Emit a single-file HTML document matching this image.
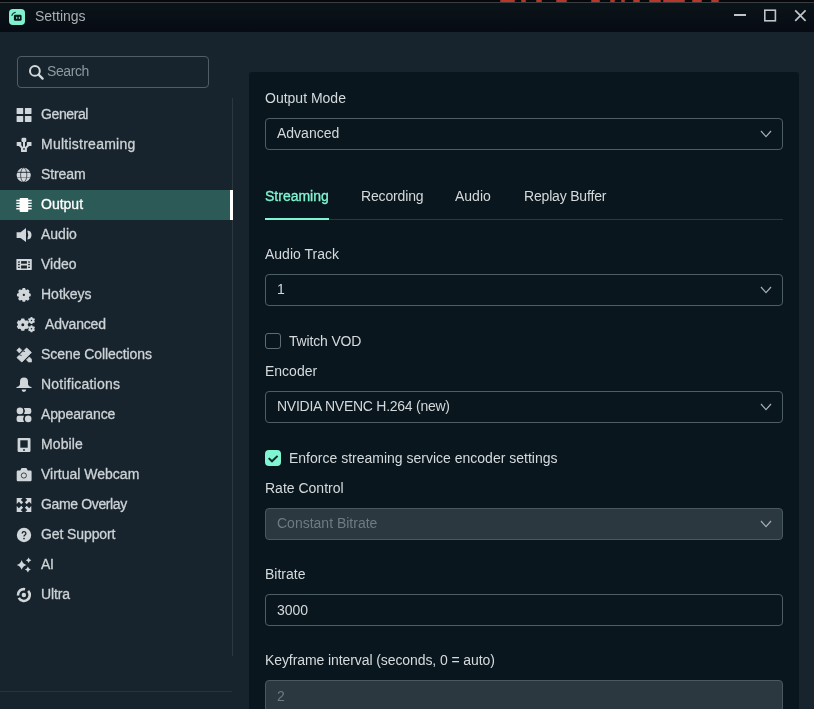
<!DOCTYPE html>
<html>
<head>
<meta charset="utf-8">
<title>Settings</title>
<style>
*{box-sizing:border-box;margin:0;padding:0}
html,body{width:814px;height:709px;overflow:hidden;background:#17242d}
body{font-family:"Liberation Sans",sans-serif;font-size:14px;color:#e3e8eb;position:relative}
.abs{position:absolute}
#topstrip{left:0;top:0;width:814px;height:3px;background:#06080b}
#topline{left:0;top:2px;width:814px;height:1px;background:#3a3e43}
#reds{left:0;top:0;width:814px;height:2px}
#reds i{position:absolute;top:0;height:2px;background:#b8362a;border-radius:1px}
#titlebar{left:0;top:3px;width:814px;height:29px;background:linear-gradient(#0a1419,#070b13)}
#title{left:35px;top:8px;font-size:14px;color:#aaafb2;line-height:16px;white-space:nowrap}
#logo{left:9px;top:9px;width:16px;height:16px}
.wc{top:9px;width:14px;height:14px}
#search{left:17px;top:56px;width:192px;height:32px;border:1px solid #4f5e65;border-radius:4px;background:#17242d}
#searchtxt{left:47px;top:63px;line-height:16px;color:#8f999e;white-space:nowrap;letter-spacing:-0.4px}
#sideline{left:232px;top:98px;width:1px;height:558px;background:#2b383f}
#footline{left:0;top:691px;width:232px;height:1px;background:#26333b}
.nav{left:0;width:233px;height:30px}
.nav span{position:absolute;left:41px;top:6px;line-height:16px;color:#cdd3d6;white-space:nowrap;-webkit-text-stroke:0.3px #cdd3d6}
.nav svg{position:absolute;left:16px;top:7px;width:16px;height:16px;fill:#d0d6d9}
.nav.active{background:#2c5a57}
.nav.active span{color:#fff;-webkit-text-stroke:0.3px #fff}
.nav.active svg{fill:#fff}
#activebar{left:230px;top:190px;width:3px;height:30px;background:#fff}
#panel{left:249px;top:72px;width:549.5px;height:637px;background:#09161d;border-radius:3px 3px 0 0}
.lbl{left:265px;line-height:16px;color:#d5dadd;white-space:nowrap}
.field{left:265px;width:518px;height:32px;border:1px solid #4f5e65;border-radius:4px;background:#09161d}
.field.dis{background:#2b383f;border-color:#4a585f}
.field span{position:absolute;left:11px;top:7px;line-height:16px;color:#d3d8db;white-space:nowrap}
.field.dis span{color:#6e7b82}
.field.sel span{top:6px}
.field svg{position:absolute;right:10px;top:11px;width:12px;height:8px}
.tab{top:188px;line-height:16px;color:#d5d9db;white-space:nowrap}
#tabline{left:265px;top:219px;width:518px;height:1px;background:#2b383f}
#tabactive{left:265px;top:218px;width:64px;height:2px;background:#80f5d2}
.cb{left:265px;width:16px;height:16px;border-radius:4px}
</style>
</head>
<body><div style="position:absolute;left:0;top:0;width:814px;height:709px;will-change:transform">
<div class="abs" id="topstrip"></div>
<div class="abs" id="reds"><i style="left:500px;width:15px"></i><i style="left:521px;width:5px"></i><i style="left:536px;width:6px"></i><i style="left:556px;width:11px"></i><i style="left:591px;width:9px"></i><i style="left:610px;width:5px"></i><i style="left:621px;width:4px"></i><i style="left:633px;width:7px"></i><i style="left:649px;width:12px"></i><i style="left:663px;width:22px"></i><i style="left:692px;width:10px"></i><i style="left:711px;width:8px"></i></div>
<div class="abs" id="topline"></div>
<div class="abs" id="titlebar"></div>
<svg class="abs" id="logo" viewBox="0 0 16 16"><rect x="0" y="0" width="16" height="16" rx="4" fill="#80f0cf"/><rect x="4.9" y="5.7" width="7.7" height="6.1" rx="1.3" fill="#06151a"/><rect x="7.2" y="7.7" width="1.1" height="2.3" rx="0.4" fill="#80f0cf"/><rect x="9.8" y="7.7" width="1.1" height="2.3" rx="0.4" fill="#80f0cf"/><path d="M2.7 6.9 A5.2 5.2 0 0 1 6.7 3.3" stroke="#0a3a33" stroke-width="1.1" fill="none"/></svg>
<svg class="abs" style="left:730px;top:5px;width:80px;height:22px" viewBox="0 0 80 22"><path d="M4 10 H16" stroke="#c0c5c8" stroke-width="2" fill="none"/><rect x="34.8" y="5.2" width="10.6" height="10.6" fill="none" stroke="#c0c5c8" stroke-width="1.6"/><path d="M65.2 5.4 L75.6 15.8 M75.6 5.4 L65.2 15.8" stroke="#c0c5c8" stroke-width="1.7" fill="none"/></svg>
<div class="abs" id="title">Settings</div>

<div class="abs" id="search"></div>
<svg class="abs" style="left:27px;top:63px;width:18px;height:18px" viewBox="0 0 18 18"><circle cx="7.9" cy="7.9" r="4.9" fill="none" stroke="#d3d8db" stroke-width="2"/><path d="M11.6 11.6 L15.6 15.6" stroke="#d3d8db" stroke-width="2.3" stroke-linecap="round"/></svg>
<div class="abs" id="searchtxt">Search</div>

<div class="abs" id="sideline"></div>
<div class="abs" id="footline"></div>

<div class="abs nav" style="top:100px"><svg viewBox="0 0 16 16"><rect x="0.6" y="0.9" width="6.6" height="6.1" rx="0.4"/><rect x="8.9" y="0.9" width="6.6" height="6.1" rx="0.4"/><rect x="0.6" y="8.9" width="6.6" height="6.1" rx="0.4"/><rect x="8.9" y="8.9" width="6.6" height="6.1" rx="0.4"/></svg><span style="letter-spacing:-0.4px">General</span></div>
<div class="abs nav" style="top:130px"><svg viewBox="0 0 16 16"><rect x="5.5" y="0.7" width="4.8" height="4.3" rx="1.2"/><rect x="0.7" y="5" width="4.6" height="4" rx="0.6"/><rect x="10.9" y="5" width="4.6" height="4" rx="0.6"/><rect x="5" y="9.9" width="5.9" height="5.1" rx="0.5"/><rect x="7" y="4.5" width="2" height="6"/><path d="M3.6 8.2 L6.4 11 M12.4 8.2 L9.6 11" stroke="#d0d6d9" stroke-width="2" fill="none"/><circle cx="8" cy="11.9" r="0.85" fill="#17242d"/></svg><span style="letter-spacing:0.25px">Multistreaming</span></div>
<div class="abs nav" style="top:160px"><svg viewBox="0 0 16 16"><circle cx="7.7" cy="7.9" r="7.1"/><ellipse cx="7.7" cy="7.9" rx="3.1" ry="7.1" fill="none" stroke="#17242d" stroke-width="0.7"/><path d="M0 5.3 H16" stroke="#17242d" stroke-width="0.9"/><path d="M0 10.6 H16" stroke="#17242d" stroke-width="0.6" opacity="0.7"/></svg><span style="letter-spacing:-0.1px">Stream</span></div>
<div class="abs nav active" style="top:190px"><svg viewBox="0 0 16 16"><rect x="3.6" y="0.9" width="8.65" height="14.1" rx="1"/><path d="M0.3 3.6 H15.7 M0.3 6.3 H15.7 M0.3 9 H15.7 M0.3 11.7 H15.7" stroke="#fff" stroke-width="1.5"/></svg><span>Output</span></div>
<div class="abs nav" style="top:220px"><svg viewBox="0 0 16 16"><path d="M0.6 5.2 H4.6 L10 1 V15 L4.6 10.9 H0.6 Z"/><path d="M11.5 3.5 A4.53 4.53 0 0 1 11.5 12.5 L11.5 11.4 A8.6 8.6 0 0 0 11.5 4.6 Z"/></svg><span>Audio</span></div>
<div class="abs nav" style="top:250px"><svg viewBox="0 0 16 16"><rect x="0.4" y="1.9" width="15.4" height="11" rx="0.6"/><g fill="#17242d"><rect x="5.1" y="4.1" width="5.8" height="2.6"/><rect x="5.1" y="8.5" width="5.8" height="3"/><rect x="2.1" y="4.4" width="1.7" height="1.3"/><rect x="2.1" y="6.9" width="1.7" height="1.3"/><rect x="2.1" y="9.7" width="1.7" height="1.3"/><rect x="12.2" y="4.4" width="1.7" height="1.3"/><rect x="12.2" y="6.9" width="1.7" height="1.3"/><rect x="12.2" y="9.7" width="1.7" height="1.3"/></g></svg><span>Video</span></div>
<div class="abs nav" style="top:280px"><svg viewBox="0 0 16 16"><path fill-rule="evenodd" d="M9.49 13.36 L9.10 14.79 L6.60 14.79 L6.21 13.36 L5.15 12.92 L3.86 13.65 L2.10 11.89 L2.83 10.60 L2.39 9.54 L0.96 9.15 L0.96 6.65 L2.39 6.26 L2.83 5.20 L2.10 3.91 L3.86 2.15 L5.15 2.88 L6.21 2.44 L6.60 1.01 L9.10 1.01 L9.49 2.44 L10.55 2.88 L11.84 2.15 L13.60 3.91 L12.87 5.20 L13.31 6.26 L14.74 6.65 L14.74 9.15 L13.31 9.54 L12.87 10.60 L13.60 11.89 L11.84 13.65 L10.55 12.92 Z M6.70 7.90 a1.15 1.15 0 1 0 2.3 0 a1.15 1.15 0 1 0 -2.3 0 Z"/></svg><span>Hotkeys</span></div>
<div class="abs nav" style="top:310px"><svg viewBox="0 0 20 16" style="width:20px"><path fill-rule="evenodd" d="M8.70 12.33 L8.29 13.82 L5.31 13.82 L4.90 12.33 L3.74 11.66 L2.24 12.05 L0.75 9.47 L1.84 8.37 L1.84 7.03 L0.75 5.93 L2.24 3.35 L3.74 3.74 L4.90 3.07 L5.31 1.58 L8.29 1.58 L8.70 3.07 L9.86 3.74 L11.36 3.35 L12.85 5.93 L11.76 7.03 L11.76 8.37 L12.85 9.47 L11.36 12.05 L9.86 11.66 Z M5.30 7.70 a1.5 1.5 0 1 0 3.0 0 a1.5 1.5 0 1 0 -3.0 0 Z"/><path fill-rule="evenodd" d="M16.56 6.19 L16.35 7.10 L14.65 7.10 L14.44 6.19 L13.79 5.82 L12.90 6.09 L12.05 4.61 L12.73 3.97 L12.73 3.23 L12.05 2.59 L12.90 1.11 L13.79 1.38 L14.44 1.01 L14.65 0.10 L16.35 0.10 L16.56 1.01 L17.21 1.38 L18.10 1.11 L18.95 2.59 L18.27 3.23 L18.27 3.97 L18.95 4.61 L18.10 6.09 L17.21 5.82 Z M14.75 3.60 a0.75 0.75 0 1 0 1.5 0 a0.75 0.75 0 1 0 -1.5 0 Z"/><path fill-rule="evenodd" d="M16.56 14.39 L16.35 15.30 L14.65 15.30 L14.44 14.39 L13.79 14.02 L12.90 14.29 L12.05 12.81 L12.73 12.17 L12.73 11.43 L12.05 10.79 L12.90 9.31 L13.79 9.58 L14.44 9.21 L14.65 8.30 L16.35 8.30 L16.56 9.21 L17.21 9.58 L18.10 9.31 L18.95 10.79 L18.27 11.43 L18.27 12.17 L18.95 12.81 L18.10 14.29 L17.21 14.02 Z M14.75 11.80 a0.75 0.75 0 1 0 1.5 0 a0.75 0.75 0 1 0 -1.5 0 Z"/></svg><span style="left:45px;letter-spacing:-0.18px">Advanced</span></div>
<div class="abs nav" style="top:340px"><svg viewBox="0 0 16 16"><path d="M10.6 1 L15.3 5.5 L5.8 15 L1 10.6 Z" stroke="#d0d6d9" stroke-width="1" stroke-linejoin="round"/><path d="M3.3 0.7 L5.9 3.3 L3.3 5.9 L0.7 3.3 Z" stroke="#d0d6d9" stroke-width="0.6" stroke-linejoin="round"/><path d="M10.4 12.9 L13.4 9.9 L15.6 12.3 V15 H12.6 Z" stroke="#d0d6d9" stroke-width="0.6" stroke-linejoin="round"/><path d="M6.4 3.8 L9 4.6 M3 7.6 L5.6 8.6" stroke="#17242d" stroke-width="0.8"/></svg><span style="letter-spacing:-0.07px">Scene Collections</span></div>
<div class="abs nav" style="top:370px"><svg viewBox="0 0 16 16"><path d="M0.5 11 H15.5 V10.1 C14 9.7 12.3 9 12 7.3 V4.6 A4 4 0 0 0 4 4.6 V7.3 C3.7 9 2 9.7 0.5 10.1 Z"/><path d="M5.6 12.6 H10.2 A2.3 2.3 0 0 1 5.6 12.6 Z"/></svg><span style="letter-spacing:0.22px">Notifications</span></div>
<div class="abs nav" style="top:400px"><svg viewBox="0 0 16 16"><circle cx="3.95" cy="3.9" r="3.3"/><path d="M8 0.9 H13.3 A2 2 0 0 1 15.3 2.9 V5 A2 2 0 0 1 13.3 7 H8 L9 3.95 Z"/><path d="M8 8.8 H2.6 A2 2 0 0 0 0.6 10.8 V13 A2 2 0 0 0 2.6 15 H8 L7 11.9 Z"/><circle cx="12.2" cy="11.9" r="3.3"/></svg><span style="letter-spacing:-0.13px">Appearance</span></div>
<div class="abs nav" style="top:430px"><svg viewBox="0 0 16 16"><rect x="1.6" y="0.9" width="12.9" height="14.1" rx="1.2"/><rect x="4.3" y="3.3" width="7.4" height="7.4" fill="#17242d"/><circle cx="8" cy="13" r="0.9" fill="#17242d"/></svg><span style="letter-spacing:0.12px">Mobile</span></div>
<div class="abs nav" style="top:460px"><svg viewBox="0 0 16 16"><path d="M1.9 3.5 H4.2 L5.6 1 H10.4 L11.8 3.5 H14.4 A1.2 1.2 0 0 1 15.6 4.7 V13.1 A1.2 1.2 0 0 1 14.4 14.3 H1.9 A1.2 1.2 0 0 1 0.7 13.1 V4.7 A1.2 1.2 0 0 1 1.9 3.5 Z"/><circle cx="7.85" cy="8.5" r="2.6" fill="none" stroke="#17242d" stroke-width="0.8"/></svg><span>Virtual Webcam</span></div>
<div class="abs nav" style="top:490px"><svg viewBox="0 0 16 16"><path d="M0.7 1 H6.7 L4.8 2.9 L7.15 5.25 L5.25 7.15 L2.9 4.8 L0.7 7 Z"/><g transform="translate(16,0) scale(-1,1)"><path d="M0.7 1 H6.7 L4.8 2.9 L7.15 5.25 L5.25 7.15 L2.9 4.8 L0.7 7 Z"/></g><g transform="translate(0,16) scale(1,-1)"><path d="M0.7 1 H6.7 L4.8 2.9 L7.15 5.25 L5.25 7.15 L2.9 4.8 L0.7 7 Z"/></g><g transform="translate(16,16) scale(-1,-1)"><path d="M0.7 1 H6.7 L4.8 2.9 L7.15 5.25 L5.25 7.15 L2.9 4.8 L0.7 7 Z"/></g></svg><span style="letter-spacing:-0.36px">Game Overlay</span></div>
<div class="abs nav" style="top:520px"><svg viewBox="0 0 16 16"><circle cx="8" cy="8" r="7.2"/><path d="M6.2 6.5 A1.85 1.85 0 1 1 9 8 C8.3 8.4 8 8.7 8 9.4" fill="none" stroke="#17242d" stroke-width="1.3"/><circle cx="8" cy="11.5" r="0.85" fill="#17242d"/></svg><span style="letter-spacing:-0.1px">Get Support</span></div>
<div class="abs nav" style="top:550px"><svg viewBox="0 0 16 16"><path d="M5.65 3.00 Q6.73 6.82 10.55 7.90 Q6.73 8.98 5.65 12.80 Q4.57 8.98 0.75 7.90 Q4.57 6.82 5.65 3.00 Z"/><path d="M12.60 0.50 Q13.22 2.68 15.40 3.30 Q13.22 3.92 12.60 6.10 Q11.98 3.92 9.80 3.30 Q11.98 2.68 12.60 0.50 Z"/><path d="M11.90 9.60 Q12.56 11.94 14.90 12.60 Q12.56 13.26 11.90 15.60 Q11.24 13.26 8.90 12.60 Q11.24 11.94 11.90 9.60 Z"/></svg><span style="letter-spacing:-0.4px">AI</span></div>
<div class="abs nav" style="top:580px"><svg viewBox="0 0 16 16"><path d="M1.97 8.51 A5.9 5.9 0 0 1 9.08 2.23" fill="none" stroke="#d0d6d9" stroke-width="2.6"/><path d="M12.16 3.98 A5.9 5.9 0 1 1 2.74 10.95" fill="none" stroke="#d0d6d9" stroke-width="2.6"/><circle cx="7.85" cy="8" r="2.2"/></svg><span style="letter-spacing:-0.15px">Ultra</span></div>
<div class="abs" id="activebar"></div>

<div class="abs" id="panel"></div>

<div class="abs lbl" style="top:90px">Output Mode</div>
<div class="abs field sel" style="top:118px"><span>Advanced</span><svg viewBox="0 0 12 8"><path d="M1 1 L6 6.6 L11 1" fill="none" stroke="#aab1b5" stroke-width="1.2"/></svg></div>

<div class="abs tab" style="left:265px;color:#80f5d2;-webkit-text-stroke:0.3px #80f5d2">Streaming</div>
<div class="abs tab" style="left:361px;letter-spacing:-0.15px">Recording</div>
<div class="abs tab" style="left:455px">Audio</div>
<div class="abs tab" style="left:524px;letter-spacing:-0.18px">Replay Buffer</div>
<div class="abs" id="tabline"></div>
<div class="abs" id="tabactive"></div>

<div class="abs lbl" style="top:246px">Audio Track</div>
<div class="abs field sel" style="top:274px"><span>1</span><svg viewBox="0 0 12 8"><path d="M1 1 L6 6.6 L11 1" fill="none" stroke="#aab1b5" stroke-width="1.2"/></svg></div>

<div class="abs cb" style="top:333px;border:1px solid #5f6c73;border-radius:3px"></div>
<div class="abs lbl" style="left:289px;top:333px;letter-spacing:-0.16px">Twitch VOD</div>

<div class="abs lbl" style="top:363px">Encoder</div>
<div class="abs field sel" style="top:391px"><span style="letter-spacing:-0.26px">NVIDIA NVENC H.264 (new)</span><svg viewBox="0 0 12 8"><path d="M1 1 L6 6.6 L11 1" fill="none" stroke="#aab1b5" stroke-width="1.2"/></svg></div>

<div class="abs cb" style="top:450px;background:#80f5d2"><svg viewBox="0 0 16 16" style="position:absolute;left:0;top:0;width:16px;height:16px"><path d="M3.7 8.1 L7 11.3 L12.6 5.9" fill="none" stroke="#0b2b2b" stroke-width="2"/></svg></div>
<div class="abs lbl" style="left:289px;top:450px">Enforce streaming service encoder settings</div>

<div class="abs lbl" style="top:480px">Rate Control</div>
<div class="abs field sel dis" style="top:508px"><span>Constant Bitrate</span><svg viewBox="0 0 12 8"><path d="M1 1 L6 6.6 L11 1" fill="none" stroke="#aab1b5" stroke-width="1.2"/></svg></div>

<div class="abs lbl" style="top:566px">Bitrate</div>
<div class="abs field" style="top:594px"><span>3000</span></div>

<div class="abs lbl" style="top:652px;letter-spacing:-0.09px">Keyframe interval (seconds, 0 = auto)</div>
<div class="abs field dis" style="top:680px"><span>2</span></div>
</div></body>
</html>
